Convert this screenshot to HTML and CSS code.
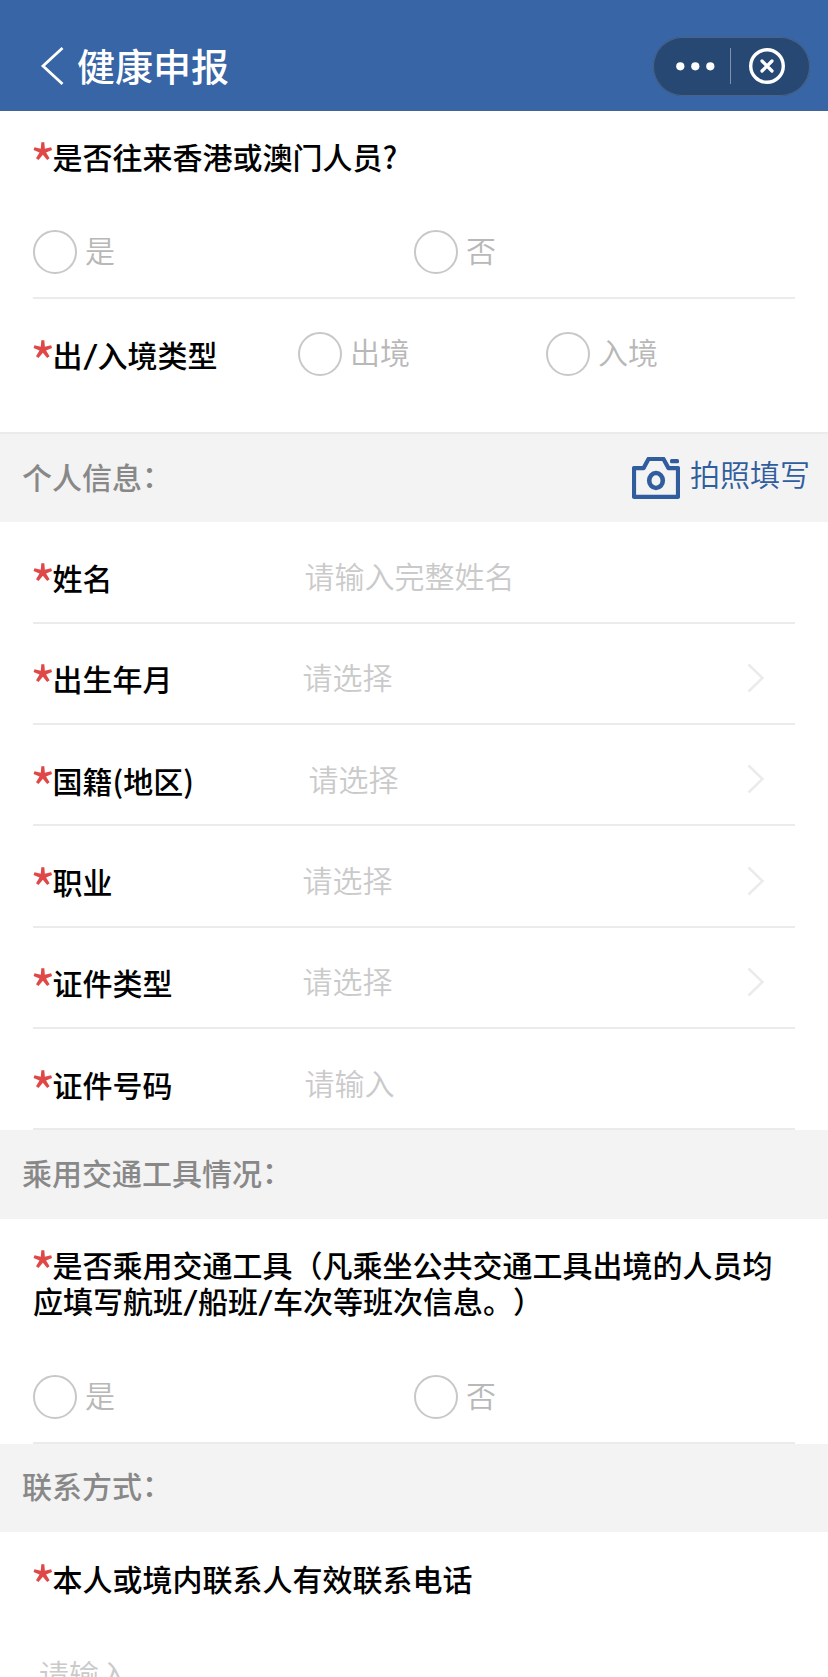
FILE: index.html
```
<!DOCTYPE html>
<html lang="zh-CN">
<head>
    <meta charset="UTF-8">
    <meta name="viewport" content="width=device-width, initial-scale=1.0">
    <title>健康申报</title>
    <link rel="stylesheet" href="styles.css">
</head>
<body>
    <header class="header">
        <svg class="back" width="24" height="40" viewBox="0 0 24 40">
            <path d="M22.5 2 L3 20 L22.5 38" fill="none" stroke="#fff" stroke-width="2.8"/>
        </svg>
        <h1 class="title">健康申报</h1>
        <div class="capsule">
            <svg width="157" height="59" viewBox="0 0 157 59">
                <circle cx="27.3" cy="29.3" r="4.1" fill="#fff"/>
                <circle cx="42.3" cy="29.3" r="4.1" fill="#fff"/>
                <circle cx="57.3" cy="29.3" r="4.1" fill="#fff"/>
                <path d="M77.5 11 V47" stroke="#8093ae" stroke-width="1"/>
                <circle cx="114" cy="29" r="16.3" fill="none" stroke="#fff" stroke-width="3.4"/>
                <path d="M109 24 L119 34 M119 24 L109 34" stroke="#fff" stroke-width="3.2" stroke-linecap="round"/>
            </svg>
        </div>
    </header>

    <div class="question">
        <div class="label"><span class="star">*</span>是否往来香港或澳门人员?</div>
        <div class="options">
            <div class="radio"><i class="circle"></i><span>是</span></div>
            <div class="radio"><i class="circle"></i><span>否</span></div>
        </div>
    </div>

    <div class="type-row">
        <div class="label"><span class="star">*</span>出<span class="slash">/</span>入境类型</div>
        <div class="radio"><i class="circle"></i><span>出境</span></div>
        <div class="radio"><i class="circle"></i><span>入境</span></div>
    </div>

    <div class="section line">
        <span class="section-name">个人信息<span class="colon">：</span></span>
        <div class="photo">
            <svg width="48" height="42" viewBox="0 0 48 42">
                <path d="M2 11.2 H11.5 L16.5 2 H31.5 L36.5 11.2 H46 V39.8 H2 Z" fill="none" stroke="#2f5d9d" stroke-width="4.2" stroke-linejoin="round"/>
                <ellipse cx="24" cy="23.5" rx="6.8" ry="7.5" fill="none" stroke="#2f5d9d" stroke-width="4.6"/>
                <rect x="38" y="2" width="9" height="4.2" rx="1.5" fill="#2f5d9d"/>
            </svg>
            <span>拍照填写</span>
        </div>
    </div>

    <div class="form">
        <div class="row">
            <div class="label"><span class="star">*</span>姓名</div>
            <div class="value input">请输入完整姓名</div>
        </div>
        <div class="row">
            <div class="label"><span class="star">*</span>出生年月</div>
            <div class="value">请选择</div>
            <svg class="arrow" width="18" height="30" viewBox="0 0 18 30"><path d="M1.5 1.5 L15.5 15 L1.5 28.5"/></svg>
        </div>
        <div class="row">
            <div class="label"><span class="star">*</span>国籍(地区)</div>
            <div class="value region">请选择</div>
            <svg class="arrow" width="18" height="30" viewBox="0 0 18 30"><path d="M1.5 1.5 L15.5 15 L1.5 28.5"/></svg>
        </div>
        <div class="row">
            <div class="label"><span class="star">*</span>职业</div>
            <div class="value">请选择</div>
            <svg class="arrow" width="18" height="30" viewBox="0 0 18 30"><path d="M1.5 1.5 L15.5 15 L1.5 28.5"/></svg>
        </div>
        <div class="row">
            <div class="label"><span class="star">*</span>证件类型</div>
            <div class="value">请选择</div>
            <svg class="arrow" width="18" height="30" viewBox="0 0 18 30"><path d="M1.5 1.5 L15.5 15 L1.5 28.5"/></svg>
        </div>
        <div class="row">
            <div class="label"><span class="star">*</span>证件号码</div>
            <div class="value input">请输入</div>
        </div>
    </div>

    <div class="section">
        <span class="section-name">乘用交通工具情况<span class="colon">：</span></span>
    </div>

    <div class="question traffic">
        <div class="label"><span class="star">*</span>是否乘用交通工具（凡乘坐公共交通工具出境的人员均应填写航班<span class="slash">/</span>船班<span class="slash">/</span>车次等班次信息。）</div>
        <div class="options">
            <div class="radio"><i class="circle"></i><span>是</span></div>
            <div class="radio"><i class="circle"></i><span>否</span></div>
        </div>
    </div>

    <div class="section last">
        <span class="section-name">联系方式<span class="colon">：</span></span>
    </div>

    <div class="contact">
        <div class="label"><span class="star">*</span>本人或境内联系人有效联系电话</div>
        <div class="value phone">请输入</div>
    </div>
</body>
</html>
```
FILE: styles.css
```
* {
    box-sizing: border-box;
}
body {
    margin: 0;
    height: 1677px;
    overflow: hidden;
    background-color: #fff;
    font-family: "Noto Sans CJK SC", sans-serif;
    font-size: 30px;
    line-height: 36px;
    color: #000;
    text-spacing-trim: space-all;
}
svg {
    display: block;
}
.header {
    display: flex;
    align-items: center;
    height: 111px;
    padding: 22px 18px 0 40px;
    background-color: #3765a6;
    border-bottom: 1px solid #416492;
}
.title {
    flex: 1;
    margin: 0 0 3px 13px;
    font-size: 38px;
    font-weight: 500;
    line-height: 44px;
    color: #fff;
}
.capsule {
    width: 157px;
    height: 59px;
    border-radius: 30px;
    background-color: #264872;
    box-shadow: inset 0 0 0 1px #4b6486;
}
.label {
    font-weight: 500;
}
.star {
    display: inline-block;
    width: 22.5px;
    margin-left: -3px;
    font-size: 55px;
    font-weight: 400;
    line-height: 0;
    color: #e04848;
    vertical-align: -17px;
}
.slash {
    display: inline-block;
    width: 15px;
    text-align: center;
    transform: scale(1.3, 0.88);
}
.question {
    margin: 0 33px;
    padding: 27px 0 23px;
    border-bottom: 2px solid #ebebeb;
}
.options {
    display: grid;
    grid-template-columns: 1fr 1fr;
    margin-top: 56px;
}
.traffic .options {
    margin-top: 57px;
}
.radio {
    display: flex;
    align-items: center;
    gap: 8px;
    font-weight: 350;
    color: #b8b8b8;
}
.radio span {
    padding-bottom: 6px;
}
.circle {
    width: 44px;
    height: 44px;
    border: 2px solid #c8c8c8;
    border-radius: 50%;
}
.type-row {
    display: grid;
    grid-template-columns: 265px 248px 1fr;
    align-items: center;
    height: 133px;
    padding: 0 33px 23px;
}
.section {
    display: flex;
    justify-content: space-between;
    align-items: center;
    height: 88.6px;
    padding: 0 20px 5px 22px;
    background-color: #f3f3f3;
    color: #888;
}
.section.line {
    height: 90px;
    border-top: 2px solid #ebebeb;
}
.section.last {
    height: 88px;
}
.section-name {
    font-weight: 500;
}
.colon {
    line-height: 0;
    vertical-align: 2px;
}
.photo {
    display: flex;
    align-items: center;
    gap: 10px;
    height: 44px;
    margin-top: 4px;
    font-weight: 350;
    color: #2f5d9d;
}
.photo span {
    margin-right: -2px;
    padding-bottom: 9px;
}
.form {
    padding-top: 0.4px;
}
.row {
    display: flex;
    align-items: center;
    height: 101.33px;
    margin: 0 33px;
    padding-top: 8px;
    border-bottom: 2px solid #ebebeb;
}
.row .label {
    width: 269.5px;
    padding-top: 2px;
}
.value {
    flex: 1;
    padding-bottom: 2px;
    font-weight: 350;
    color: #cacaca;
}
.input {
    padding-left: 2px;
}
.region {
    padding-left: 6px;
}
.arrow {
    margin: 1px 30px 0 0;
    fill: none;
    stroke: #ebebeb;
    stroke-width: 2.6;
}
.contact {
    padding: 28px 33px 0;
}
.phone {
    margin-top: 59px;
    padding-left: 6px;
}
```
